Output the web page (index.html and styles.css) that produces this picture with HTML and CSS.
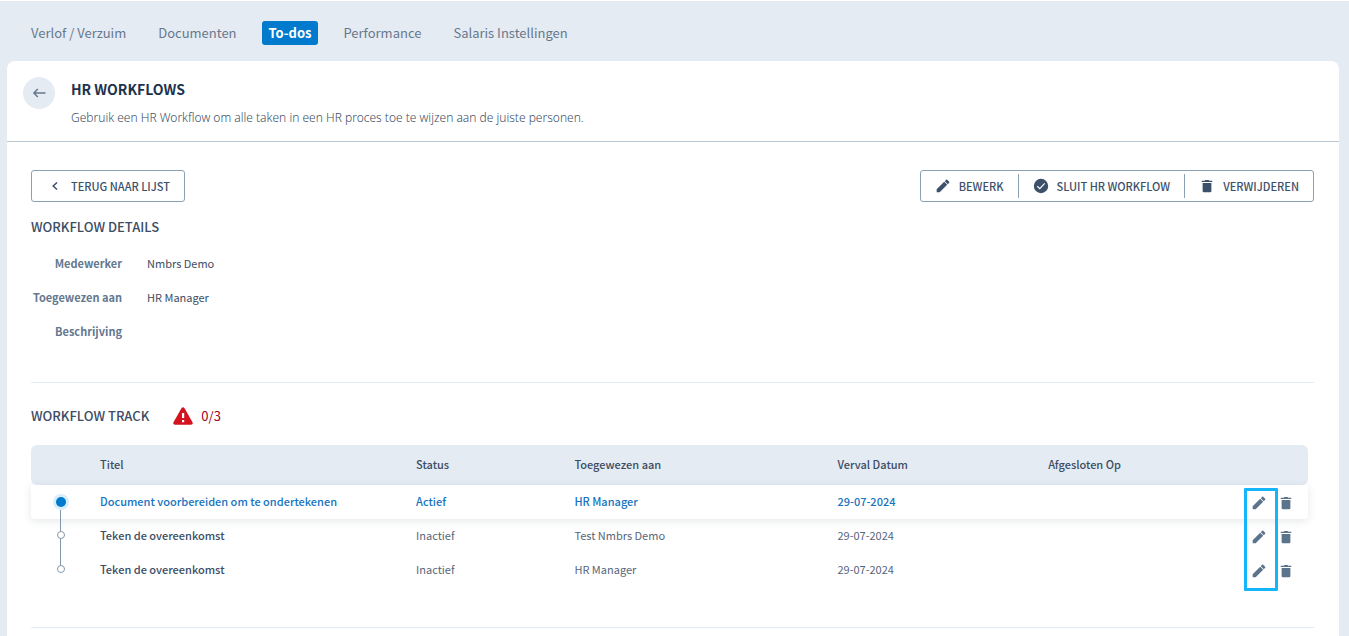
FILE: index.html
```html
<!DOCTYPE html>
<html lang="nl">
<head>
<meta charset="utf-8">
<meta name="viewport" content="width=device-width, initial-scale=1">
<title>HR Workflows</title>
<link rel="stylesheet" href="styles.css">
</head>
<body>
<svg class="sprite" aria-hidden="true">
  <symbol id="pencil" viewBox="0 0 24 24"><path d="M2.500 17V21.500H7L18.300 10.200l-4.500-4.500zM21.200 7.300a1.200 1.200 0 0 0 0-1.700l-2.800-2.800a1.200 1.200 0 0 0-1.700 0l-2 2 4.500 4.500z"/></symbol>
  <symbol id="trash" viewBox="0 0 24 24"><path d="M4.500 7V20.500a2 2 0 0 0 2 2h11a2 2 0 0 0 2-2V7zM21 2.800H16l-1.300-1.300H9.300L8 2.800H3v2.500h18z"/></symbol>
</svg>
<nav class="tabs" aria-label="Onderdelen">
  <a class="tab" href="#verlof">Verlof / Verzuim</a>
  <a class="tab" href="#documenten">Documenten</a>
  <a class="tab tab-active" href="#todos" aria-current="page">To-dos</a>
  <a class="tab" href="#performance">Performance</a>
  <a class="tab" href="#salaris">Salaris Instellingen</a>
</nav>
<main class="card">
  <header class="page-header">
    <button class="back" type="button" aria-label="Terug">
      <svg viewBox="0 0 14 12" width="14" height="12"><path d="M13.500 6H2M5.800 2L1.900 6L5.800 10" fill="none" stroke="currentColor" stroke-width="1.500"/></svg>
    </button>
    <div>
      <h1 class="page-title">HR WORKFLOWS</h1>
      <p class="page-intro">Gebruik een HR Workflow om alle taken in een HR proces toe te wijzen aan de juiste personen.</p>
    </div>
  </header>
  <div class="content">
    <section class="details">
      <div class="toolbar">
        <button class="button button-list" type="button">
          <svg viewBox="0 0 8 10" width="8" height="10"><path d="M6 1.500L2.200 5L6 8.500" fill="none" stroke="currentColor" stroke-width="1.500"/></svg>
          TERUG NAAR LIJST
        </button>
        <div class="button-group">
          <button class="button" type="button"><svg class="icon" width="16" height="16"><use href="#pencil"/></svg>BEWERK</button>
          <button class="button" type="button"><svg class="icon" viewBox="0 0 16 16" width="16" height="16"><circle cx="8" cy="8" r="7.200"/><path d="M4.300 8.300L6.800 10.700L11.700 5.400" fill="none" stroke="#fff" stroke-width="1.200"/></svg>SLUIT HR WORKFLOW</button>
          <button class="button" type="button"><svg class="icon" width="16" height="14"><use href="#trash"/></svg>VERWIJDEREN</button>
        </div>
      </div>
      <h2 class="section-title">WORKFLOW DETAILS</h2>
      <dl class="facts">
        <dt>Medewerker</dt><dd>Nmbrs Demo</dd>
        <dt>Toegewezen aan</dt><dd>HR Manager</dd>
        <dt>Beschrijving</dt><dd></dd>
      </dl>
    </section>
    <section class="track">
      <div class="track-head">
        <h2 class="section-title">WORKFLOW TRACK</h2>
        <p class="progress">
          <svg viewBox="0 0 20 18" width="20" height="18"><path d="M8.600 1.100Q10-.6 11.400 1.100L19.500 15.200Q20.200 17.500 18 17.800H2Q-.2 17.500.5 15.200z" fill="#d3131f"/><path d="M9 6h2.200v5H9zM9 13h2.200v2.200H9z" fill="#fff"/></svg>
          0/3
        </p>
      </div>
      <div class="table-wrap">
        <table class="steps">
          <colgroup><col class="col-mark"><col class="col-title"><col class="col-status"><col class="col-owner"><col class="col-due"><col><col class="col-actions"></colgroup>
          <thead><tr><th></th><th scope="col">Titel</th><th scope="col">Status</th><th scope="col">Toegewezen aan</th><th scope="col">Verval Datum</th><th scope="col">Afgesloten Op</th><th></th></tr></thead>
          <tbody>
            <tr class="current">
              <td><svg class="mark" viewBox="0 0 60 34" width="60" height="34"><path d="M29.500 24V34" class="line"/><circle cx="30" cy="17" r="8" fill="#d9edfa"/><circle cx="30" cy="17" r="5" fill="#007acc"/></svg></td>
              <td class="step-name">Document voorbereiden om te ondertekenen</td><td>Actief</td><td>HR Manager</td><td>29-07-2024</td><td></td>
              <td><div class="actions"><button type="button" aria-label="Bewerk"><svg width="16" height="16"><use href="#pencil"/></svg></button><button type="button" aria-label="Verwijder"><svg width="14" height="14"><use href="#trash"/></svg></button></div></td>
            </tr>
            <tr>
              <td><svg class="mark" viewBox="0 0 60 34" width="60" height="34"><path d="M29.500 0V34" class="line"/><circle cx="30" cy="16" r="3.500" class="dot"/></svg></td>
              <td class="step-name">Teken de overeenkomst</td><td>Inactief</td><td>Test Nmbrs Demo</td><td>29-07-2024</td><td></td>
              <td><div class="actions"><button type="button" aria-label="Bewerk"><svg width="16" height="16"><use href="#pencil"/></svg></button><button type="button" aria-label="Verwijder"><svg width="14" height="14"><use href="#trash"/></svg></button></div></td>
            </tr>
            <tr>
              <td><svg class="mark" viewBox="0 0 60 34" width="60" height="34"><path d="M29.500 0V14" class="line"/><circle cx="30" cy="16" r="3.500" class="dot"/></svg></td>
              <td class="step-name">Teken de overeenkomst</td><td>Inactief</td><td>HR Manager</td><td>29-07-2024</td><td></td>
              <td><div class="actions"><button type="button" aria-label="Bewerk"><svg width="16" height="16"><use href="#pencil"/></svg></button><button type="button" aria-label="Verwijder"><svg width="14" height="14"><use href="#trash"/></svg></button></div></td>
            </tr>
          </tbody>
        </table>
        <div class="highlight"></div>
      </div>
    </section>
  </div>
</main>
</body>
</html>
```

FILE: styles.css
```css
* { box-sizing: border-box; }
html { height: 100%; }
body {
  display: flex;
  flex-direction: column;
  min-height: 100%;
  margin: 0;
  border-top: 1px solid #fff;
  background: #e4ebf3;
  color: #3c4d63;
  font: 12px/20px "Noto Sans CJK SC", "Open Sans", sans-serif;
}
h1, h2, p, dl, dd { margin: 0; }
button {
  border: 0;
  padding: 0;
  background: none;
  color: inherit;
  font: inherit;
  cursor: pointer;
}
svg { display: block; flex: none; fill: currentColor; }
.sprite { position: absolute; width: 0; height: 0; }

.tabs {
  display: flex;
  gap: 18px;
  padding: 20px 24px 16px;
}
.tab {
  padding: 0 7px;
  border-radius: 3px;
  color: #68788b;
  font-size: 13px;
  line-height: 24px;
  text-decoration: none;
}
.tab-active { background: #007acc; color: #fff; font-weight: 700; }

.card {
  flex: 1;
  margin: 0 10px 0 7px;
  border-radius: 8px 8px 0 0;
  background: #fff;
}
.page-header {
  display: flex;
  gap: 16px;
  padding: 16px 16px 13px;
  border-bottom: 1px solid #b9c7d3;
}
.back {
  display: flex;
  align-items: center;
  justify-content: center;
  width: 32px;
  height: 32px;
  border-radius: 50%;
  background: #e4ebf3;
  color: #64788c;
}
.page-title { color: #1d334d; font-size: 14px; line-height: 25px; font-weight: 700; }
.page-intro { padding-top: 6px; font-family: "Noto Sans", sans-serif; font-weight: 300; }

.content { padding: 28px 25px 0 24px; }
.details { padding-bottom: 34px; border-bottom: 1px solid #e4ebf3; }
.toolbar { display: flex; justify-content: space-between; }
.button {
  display: flex;
  align-items: center;
  height: 30px;
  color: #3c506a;
  font-size: 11px;
  font-weight: 500;
}
.button-list {
  gap: 12px;
  height: 32px;
  padding: 0 14px 0 19px;
  border: 1px solid #8ba1b2;
  border-radius: 3px;
}
.button-group { display: flex; align-items: center; border: 1px solid #8ba1b2; border-radius: 3px; }
.button-group .button { height: 24px; gap: 8px; padding: 0 14px; }
.button-group .button + .button { border-left: 1px solid #8ba1b2; }
.section-title { font-size: 13px; line-height: 20px; font-weight: 500; }
.details .section-title { margin-top: 15px; }
.facts {
  display: grid;
  grid-template-columns: 91px 1fr;
  column-gap: 25px;
  grid-auto-rows: 34px;
  margin-top: 9px;
  line-height: 34px;
}
.facts dt { color: #64788f; font-size: 11px; font-weight: 700; text-align: right; white-space: nowrap; }
.facts dd { font-size: 11px; }

.track { padding: 23px 0 40px; border-bottom: 1px solid #e4ebf3; }
.track-head { display: flex; align-items: center; gap: 24px; }
.progress { display: flex; align-items: center; gap: 8px; color: #a3001b; font-size: 13px; }
.table-wrap { position: relative; margin: 19px 6px 0 0; }
.steps { width: 100%; border-collapse: separate; border-spacing: 0; table-layout: fixed; font-size: 11px; }
.steps th { height: 40px; padding: 0 0 2px; background: #e4ebf3; font-weight: 500; text-align: left; }
.steps th:first-child { border-radius: 6px 0 0 6px; }
.steps th:last-child { border-radius: 0 6px 6px 0; }
.steps td { height: 34px; padding: 0 0 2px; color: #56667a; }
.steps td:first-child { padding: 0; }
.steps .step-name { color: #3c4d63; font-weight: 500; }
.steps .current { border-radius: 0 0 4px 4px; box-shadow: 0 2px 8px rgba(40, 60, 80, 0.12); }
.steps .current td:not(:last-child) { color: #1673c0; font-weight: 500; }
.col-mark { width: 69px; }
.col-title { width: 24.75%; }
.col-status { width: 12.4%; }
.col-owner { width: 20.6%; }
.col-due { width: 16.500%; }
.col-actions { width: 57px; }
.line, .dot { fill: none; stroke: #8399ab; }
.dot { fill: #fff; }
.actions { display: flex; align-items: center; gap: 12px; padding-top: 4px; color: #5c738c; }
.highlight {
  position: absolute;
  top: 43px;
  right: 30px;
  width: 34px;
  height: 103px;
  border: 3px solid #14b5fa;
  border-radius: 1px;
  pointer-events: none;
}
```
